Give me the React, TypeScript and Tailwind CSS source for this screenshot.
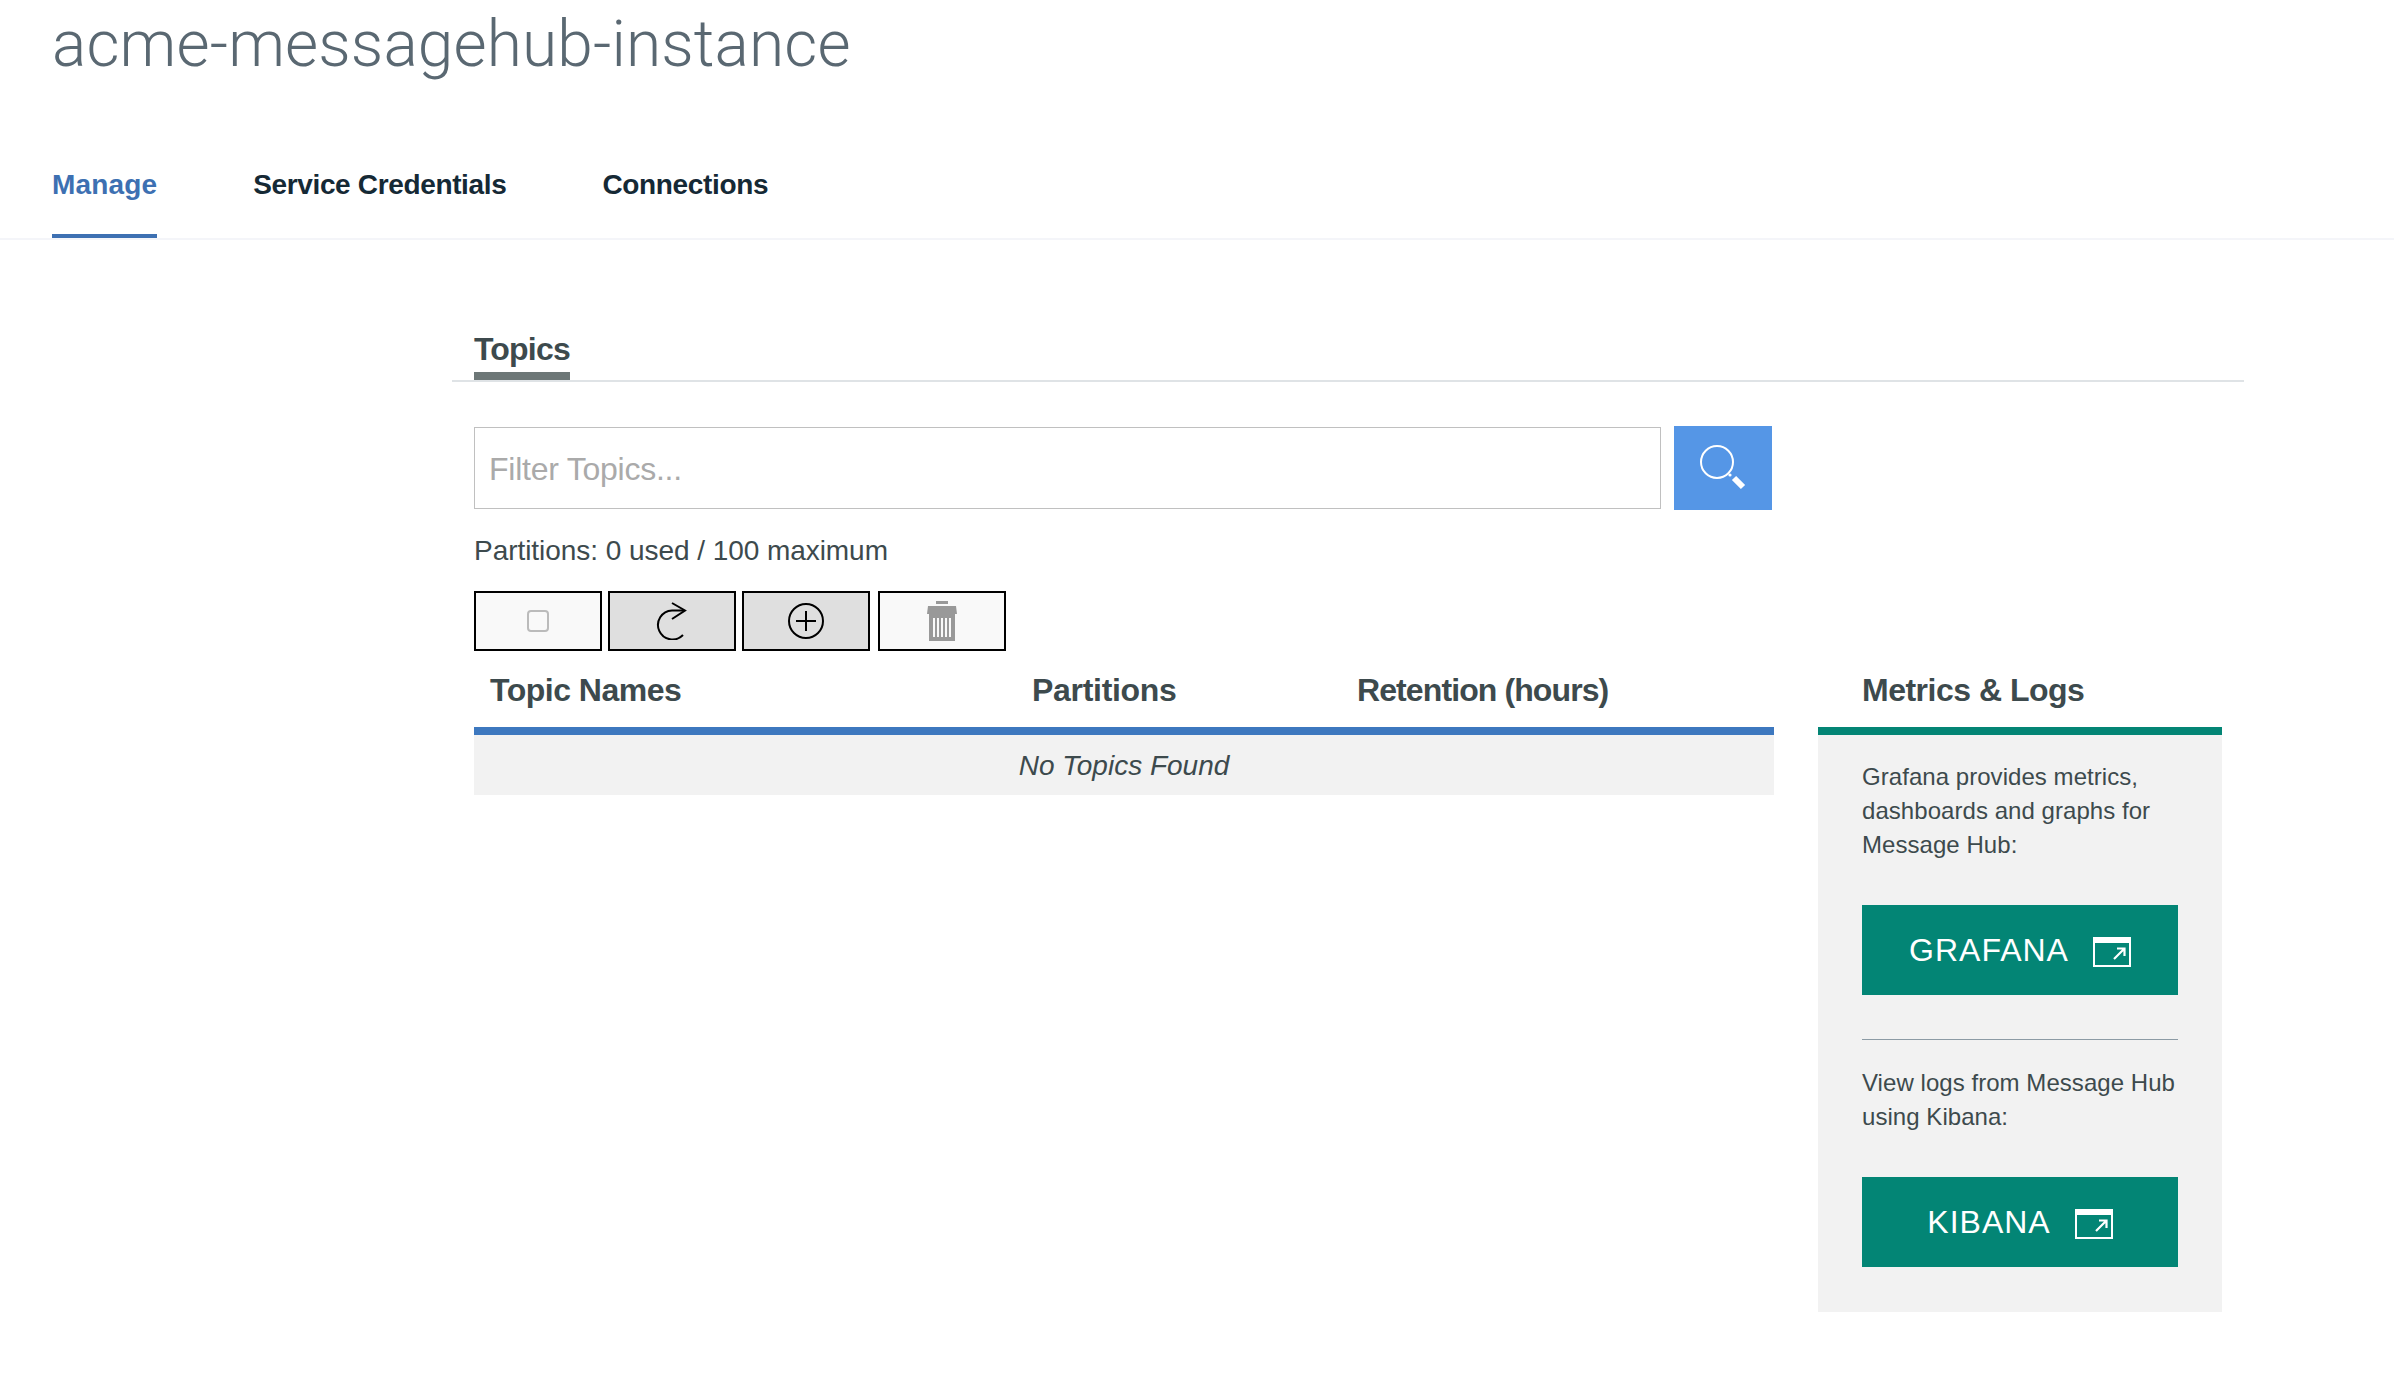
const sans = "font-['Liberation_Sans',Arial,sans-serif]";

const tabs = ["Manage", "Service Credentials", "Connections"];

function ExternalIcon() {
  return (
    <svg width="38" height="30" viewBox="0 0 38 30" fill="none" className="shrink-0 mt-[4px]">
      <rect x="1" y="1" width="36" height="28" stroke="#fff" strokeWidth="2" />
      <rect x="1" y="1" width="36" height="5" fill="#fff" />
      <path d="M21 22 L31 12 M24 11.5 H31.5 V19" stroke="#fff" strokeWidth="2.2" />
    </svg>
  );
}

function ToolButton({ active, className, children }: { active?: boolean; className?: string; children: React.ReactNode }) {
  return (
    <button
      type="button"
      className={`w-[128px] h-[60px] border-2 border-black flex items-center justify-center ${active ? "bg-[#dfdfdf]" : "bg-[#f9f9f9]"} ${className ?? ""}`}
    >
      {children}
    </button>
  );
}

function LinkButton({ label }: { label: string }) {
  return (
    <a className="h-[90px] bg-[#038575] text-white flex items-center justify-center gap-[24px] text-[32px] tracking-[1px]">
      {label}
      <ExternalIcon />
    </a>
  );
}

export default function App() {
  return (
    <div className={`${sans} bg-white min-h-[1398px] text-[#3d4a4d]`}>
      <h1 className="pl-[52px] h-[90px] leading-[90px] text-[64px] tracking-[0.13px] font-light text-[#5a6872] font-['Roboto',sans-serif]">
        acme-messagehub-instance
      </h1>

      <nav className="flex gap-[96px] pl-[52px] h-[150px] border-b-2 border-[#f4f5f9]">
        {tabs.map((tab, i) => (
          <a
            key={tab}
            className={`h-[148px] pt-[45px] flex items-center text-[28px] font-bold border-b-4 ${
              i === 0 ? "tracking-[0.15px] text-[#3d70b2] border-[#3d70b2]" : "tracking-[-0.35px] text-[#152935] border-transparent"
            }`}
          >
            {tab}
          </a>
        ))}
      </nav>

      <main className="ml-[452px] w-[1792px] pt-[86px]">
        <div className="pl-[22px] border-b-2 border-[#dfe3e6] h-[56px]">
          <span className="inline-block h-[54px] text-[32px] leading-[46px] font-bold tracking-[-0.8px] border-b-8 border-[#6d7777]">
            Topics
          </span>
        </div>

        <div className="pl-[22px] flex pt-[44px]">
          <div className="flex-1 min-w-0">
            <div className="flex items-stretch h-[84px]">
              <div className="w-[1187px] mt-[1px] mb-[1px] border border-[#c0c0c0] flex items-center px-[14px] pt-[1px] text-[32px] tracking-[-0.25px] text-[#aaaaaa]">
                Filter Topics...
              </div>
              <button type="button" className="ml-[13px] w-[98px] bg-[#5596e6] flex items-center justify-center pl-[2px] pt-[3px]">
                <svg width="52" height="52" viewBox="0 0 52 52" fill="none">
                  <circle cx="19" cy="18" r="16" stroke="#fff" strokeWidth="2" />
                  <circle cx="32" cy="31" r="1.6" fill="#fff" />
                  <path d="M36 34 L45 43" stroke="#fff" strokeWidth="6" />
                </svg>
              </button>
            </div>

            <p className="pt-[24px] text-[28px] leading-[34px] tracking-[-0.05px]">Partitions: 0 used / 100 maximum</p>

            <div className="flex gap-[6px] mt-[23px]">
              <ToolButton>
                <span className="w-[22px] h-[22px] rounded-[4px] border-2 border-[#bbbbbb] block" />
              </ToolButton>
              <ToolButton active>
                <svg width="32" height="38" viewBox="0 0 32 38" fill="none" stroke="#000" strokeWidth="2">
                  <path d="M28 8.5 H16 A14.5 14.5 0 1 0 27 33" />
                  <path d="M16 1 L29 8.5 L16 17" />
                </svg>
              </ToolButton>
              <ToolButton active>
                <svg width="36" height="36" viewBox="0 0 36 36" fill="none" stroke="#000" strokeWidth="2">
                  <circle cx="18" cy="18" r="17" />
                  <path d="M18 8 V28 M8 18 H28" />
                </svg>
              </ToolButton>
              <ToolButton className="ml-[2px]">
                <svg width="30" height="40" viewBox="0 0 30 40" fill="#999999">
                  <rect x="9" y="0" width="12" height="3" />
                  <path d="M1 5 H29 L30 13 H0 Z" />
                  <path
                    d="M2 13 H28 V40 H2 Z M6 17 V36 H8 V17 Z M10 17 V36 H12 V17 Z M14 17 V36 H16 V17 Z M18 17 V36 H20 V17 Z M22 17 V36 H24 V17 Z"
                    fillRule="evenodd"
                  />
                </svg>
              </ToolButton>
            </div>

            <div className="w-[1300px] mt-[11px] h-[55px] pb-[10px] border-b-8 border-[#3d78bf] box-content flex items-center text-[32px] font-bold">
              <span className="w-[558px] pl-[16px] tracking-[-0.5px]">Topic Names</span>
              <span className="w-[325px] tracking-[-0.3px]">Partitions</span>
              <span className="tracking-[-0.9px]">Retention (hours)</span>
            </div>
            <div className="w-[1300px] h-[60px] pt-[1px] bg-[#f2f2f2] flex items-center justify-center text-[28px] italic">
              No Topics Found
            </div>
          </div>

          <aside className="w-[404px] mr-[22px] mt-[236px] shrink-0">
            <h2 className="h-[55px] pb-[10px] box-content border-b-8 border-[#038575] pl-[44px] flex items-center text-[32px] font-bold tracking-[-0.5px]">
              Metrics &amp; Logs
            </h2>
            <div className="bg-[#f2f2f2] h-[577px] px-[44px] pt-[25px] text-[24px] leading-[34px] tracking-[0.05px]">
              <p>
                Grafana provides metrics,
                <br />
                dashboards and graphs for
                <br />
                Message Hub:
              </p>
              <div className="mt-[43px]">
                <LinkButton label="GRAFANA" />
              </div>
              <div className="mt-[44px] border-t border-[#8c9ba5]" />
              <p className="mt-[26px]">
                View logs from Message Hub
                <br />
                using Kibana:
              </p>
              <div className="mt-[43px]">
                <LinkButton label="KIBANA" />
              </div>
            </div>
          </aside>
        </div>
      </main>
    </div>
  );
}
